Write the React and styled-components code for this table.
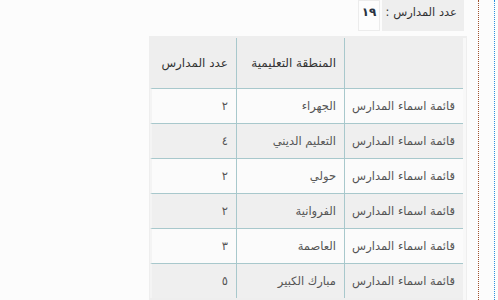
import React from "react";
import styled, { createGlobalStyle } from "styled-components";

const GlobalStyle = createGlobalStyle`
  html, body { margin: 0; padding: 0; background: #fcfcfc; }
  body { font-family: "DejaVu Sans", "Noto Sans", sans-serif; }
`;

const Frame = styled.div`
  width: 494px;
  height: 300px;
  border-right: 1px dotted #2b8fe0;
  overflow: hidden;
`;

const Column = styled.div`
  width: 467px;
  height: 300px;
  padding-right: 11px;
  border-right: 1px dotted #a0522d;
  direction: rtl;
`;

const Summary = styled.div`
  display: flex;
  gap: 2px;
  margin-right: 3px;
  margin-bottom: 5px;
  height: 31px;
`;

const SummaryLabel = styled.div`
  width: 75px;
  padding-right: 7px;
  background: #eeeeee;
  color: #333;
  font-size: 11.5px;
  line-height: 18px;
  padding-top: 3px;
  box-sizing: content-box;
`;

const SummaryValue = styled.div`
  width: 20px;
  border: 1px solid #ececec;
  background: #fdfdfd;
  color: #2a3442;
  font-size: 12px;
  font-weight: 600;
  line-height: 18px;
  padding-top: 2px;
  text-align: center;
`;

const TableWrap = styled.div`
  width: 316px;
  padding: 2px 1px 0 1px;
  background: #eeeeee;
  height: 262px;
`;

const TableArea = styled.div`
  border-right: 3px solid #f8f8f8;
  height: 100%;
`;

const Row = styled.div`
  display: grid;
  grid-template-columns: 119px 108px 84px;
  box-sizing: border-box;
  height: ${(p) => (p.$head ? "50px" : "35px")};
  border-top: ${(p) => (p.$head ? "none" : "1px solid #a8c8cc")};
  border-left: 2px solid ${(p) => (p.$head ? "transparent" : "#f4f4f4")};
  background: ${(p) => (p.$head ? "#eeeeee" : p.$alt ? "#efefef" : "#fbfbfb")};
  direction: rtl;
`;

const Cell = styled.div`
  display: flex;
  align-items: center;
  padding: 0 8px;
  font-size: ${(p) => (p.$head ? "12px" : "11.5px")};
  color: ${(p) => (p.$head ? "#333" : "#555")};
  border-left: ${(p) => (p.$last ? "none" : "1px solid #a8c8cc")};
  white-space: nowrap;
  overflow: hidden;
`;

const rows = [
  ["الجهراء", "٢"],
  ["التعليم الديني", "٤"],
  ["حولي", "٢"],
  ["الفروانية", "٢"],
  ["العاصمة", "٣"],
  ["مبارك الكبير", "٥"],
];

export default function App() {
  return (
    <>
      <GlobalStyle />
      <Frame>
        <Column>
          <Summary>
            <SummaryLabel>عدد المدارس :</SummaryLabel>
            <SummaryValue>١٩</SummaryValue>
          </Summary>
          <TableWrap>
            <TableArea>
              <Row $head>
                <Cell $head></Cell>
                <Cell $head>المنطقة التعليمية</Cell>
                <Cell $head $last>عدد المدارس</Cell>
              </Row>
              {rows.map(([region, count], i) => (
                <Row key={region} $alt={i % 2 === 1}>
                  <Cell>قائمة اسماء المدارس</Cell>
                  <Cell>{region}</Cell>
                  <Cell $last>{count}</Cell>
                </Row>
              ))}
            </TableArea>
          </TableWrap>
        </Column>
      </Frame>
    </>
  );
}
